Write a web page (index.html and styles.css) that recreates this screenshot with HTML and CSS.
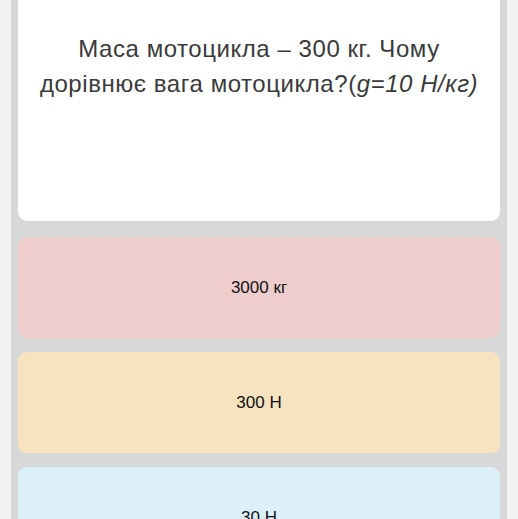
FILE: index.html
```html
<!DOCTYPE html>
<html lang="uk">
<head>
<meta charset="utf-8">
<link rel="stylesheet" href="styles.css">
</head>
<body>
<div class="page">
  <div class="panel">
    <div class="question">
      <p class="q-text">Маса мотоцикла – 300 кг. Чому<br>дорівнює вага мотоцикла?(<i>g=10 Н/кг)</i></p>
    </div>
    <div class="options">
      <div class="option pink">3000 кг</div>
      <div class="option orange">300 Н</div>
      <div class="option blue">30 Н</div>
    </div>
  </div>
</div>
</body>
</html>
```
FILE: styles.css
```css
html, body {
  margin: 0;
  padding: 0;
  background: #f2f2f2;
  font-family: "Liberation Sans", Arial, sans-serif;
  overflow: hidden;
}
.page {
  height: 519px;
  padding: 0 11px;
  overflow: hidden;
}
.panel {
  background: #d8d8d8;
  height: 100%;
  padding: 0 7px;
  display: flex;
  flex-direction: column;
}
.question {
  background: #ffffff;
  height: 221px;
  border-radius: 0 0 9px 9px;
  box-sizing: border-box;
  padding-top: 31px;
  flex: none;
}
.q-text {
  margin: 0;
  text-align: center;
  font-size: 24px;
  letter-spacing: 0.55px;
  line-height: 35px;
  color: #3a3a3a;
}
.options {
  display: flex;
  flex-direction: column;
  gap: 14px;
  margin-top: 16px;
}
.option {
  height: 101px;
  border-radius: 9px;
  display: flex;
  align-items: center;
  justify-content: center;
  font-size: 17px;
  color: #111;
  flex: none;
}
.pink { background: #f0cdcd; }
.orange { background: #f8e3c1; }
.blue { background: #dcf0fa; }
```
